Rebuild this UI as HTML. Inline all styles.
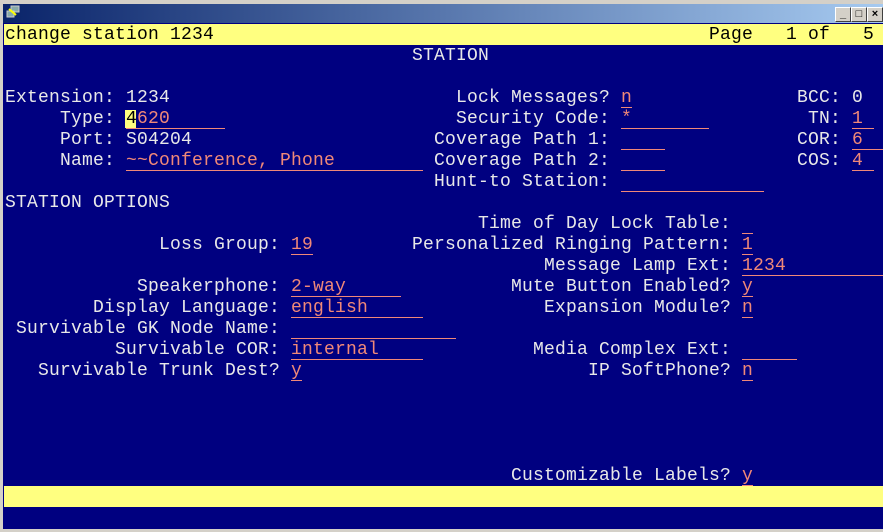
<!DOCTYPE html>
<html><head><meta charset="utf-8"><style>
html,body{margin:0;padding:0;width:883px;height:532px;overflow:hidden;background:#d4d0c8}
#win{position:absolute;left:0;top:0;width:883px;height:532px;background:#d4d0c8}
#tb{position:absolute;left:3px;top:4px;width:880px;height:19px;background:linear-gradient(90deg,#0a246a,#a6caf0)}
#scr{position:absolute;left:3px;top:23px;width:880px;height:506px;background:#000080}
.bar{position:absolute;left:4px;width:879px;height:21px;background:#ffff80}
.t{position:absolute;font-family:"Liberation Mono",monospace;font-size:18px;letter-spacing:0.2px;line-height:21px;height:21px;color:#e8e8e8;white-space:pre;margin-top:1px}
.k{color:#000}
.f{color:#f08878;border-bottom:1px solid #f08878;height:19px}
.btn{position:absolute;top:7px;width:14px;height:13px;background:#d4d0c8;border:1px solid;border-color:#fff #404040 #404040 #fff;font:bold 11px "Liberation Sans",sans-serif;text-align:center;line-height:13px;color:#000}
</style></head><body><div id="win">
<div id="tb"></div>
<div style="position:absolute;left:6px;top:5px;width:14px;height:14px;">
<svg width="14" height="14"><rect x="5" y="1" width="8" height="6" fill="#8aa" stroke="#ccc"/><rect x="1" y="6" width="7" height="6" fill="#8aa" stroke="#ccc"/><path d="M3 4 L10 10" stroke="#ff0" stroke-width="2"/></svg></div>
<div class="btn" style="left:835px">_</div>
<div class="btn" style="left:851px">□</div>
<div class="btn" style="left:867px">×</div>
<div id="scr"></div>
<div class="bar" style="top:24px"></div>
<div class="bar" style="top:486px"></div>

<div class="t k" style="left:5px;top:24px">change station 1234</div>
<div class="t k" style="left:709px;top:24px">Page   1 of   5</div>
<div class="t" style="left:412px;top:45px">STATION</div>

<div class="t" style="left:5px;top:87px">Extension: 1234</div>
<div class="t" style="left:456px;top:87px">Lock Messages?</div>
<div class="t f" style="left:621px;top:87px">n</div>
<div class="t" style="left:797px;top:87px">BCC: 0</div>

<div class="t" style="left:5px;top:108px">     Type:</div>
<div class="t f" style="left:126px;top:108px">4620     </div>
<div style="position:absolute;left:125px;top:110px;width:11px;height:18px;background:#ffff80"></div>
<div class="t k" style="left:126px;top:108px">4</div>
<div class="t" style="left:456px;top:108px">Security Code:</div>
<div class="t f" style="left:621px;top:108px">*       </div>
<div class="t" style="left:808px;top:108px">TN:</div>
<div class="t f" style="left:852px;top:108px">1 </div>

<div class="t" style="left:5px;top:129px">     Port: S04204</div>
<div class="t" style="left:434px;top:129px">Coverage Path 1:</div>
<div class="t f" style="left:621px;top:129px">    </div>
<div class="t" style="left:797px;top:129px">COR:</div>
<div class="t f" style="left:852px;top:129px">6  </div>

<div class="t" style="left:5px;top:150px">     Name:</div>
<div class="t f" style="left:126px;top:150px">~~Conference, Phone        </div>
<div class="t" style="left:434px;top:150px">Coverage Path 2:</div>
<div class="t f" style="left:621px;top:150px">    </div>
<div class="t" style="left:797px;top:150px">COS:</div>
<div class="t f" style="left:852px;top:150px">4 </div>

<div class="t" style="left:434px;top:171px">Hunt-to Station:</div>
<div class="t f" style="left:621px;top:171px">             </div>

<div class="t" style="left:5px;top:192px">STATION OPTIONS</div>

<div class="t" style="left:478px;top:213px">Time of Day Lock Table:</div>
<div class="t f" style="left:742px;top:213px"> </div>

<div class="t" style="left:159px;top:234px">Loss Group:</div>
<div class="t f" style="left:291px;top:234px">19</div>
<div class="t" style="left:412px;top:234px">Personalized Ringing Pattern:</div>
<div class="t f" style="left:742px;top:234px">1</div>

<div class="t" style="left:544px;top:255px">Message Lamp Ext:</div>
<div class="t f" style="left:742px;top:255px">1234         </div>

<div class="t" style="left:137px;top:276px">Speakerphone:</div>
<div class="t f" style="left:291px;top:276px">2-way     </div>
<div class="t" style="left:511px;top:276px">Mute Button Enabled?</div>
<div class="t f" style="left:742px;top:276px">y</div>

<div class="t" style="left:93px;top:297px">Display Language:</div>
<div class="t f" style="left:291px;top:297px">english     </div>
<div class="t" style="left:544px;top:297px">Expansion Module?</div>
<div class="t f" style="left:742px;top:297px">n</div>

<div class="t" style="left:16px;top:318px">Survivable GK Node Name:</div>
<div class="t f" style="left:291px;top:318px">               </div>

<div class="t" style="left:115px;top:339px">Survivable COR:</div>
<div class="t f" style="left:291px;top:339px">internal    </div>
<div class="t" style="left:533px;top:339px">Media Complex Ext:</div>
<div class="t f" style="left:742px;top:339px">     </div>

<div class="t" style="left:38px;top:360px">Survivable Trunk Dest?</div>
<div class="t f" style="left:291px;top:360px">y</div>
<div class="t" style="left:588px;top:360px">IP SoftPhone?</div>
<div class="t f" style="left:742px;top:360px">n</div>

<div class="t" style="left:511px;top:465px">Customizable Labels?</div>
<div class="t f" style="left:742px;top:465px">y</div>
</div></body></html>
